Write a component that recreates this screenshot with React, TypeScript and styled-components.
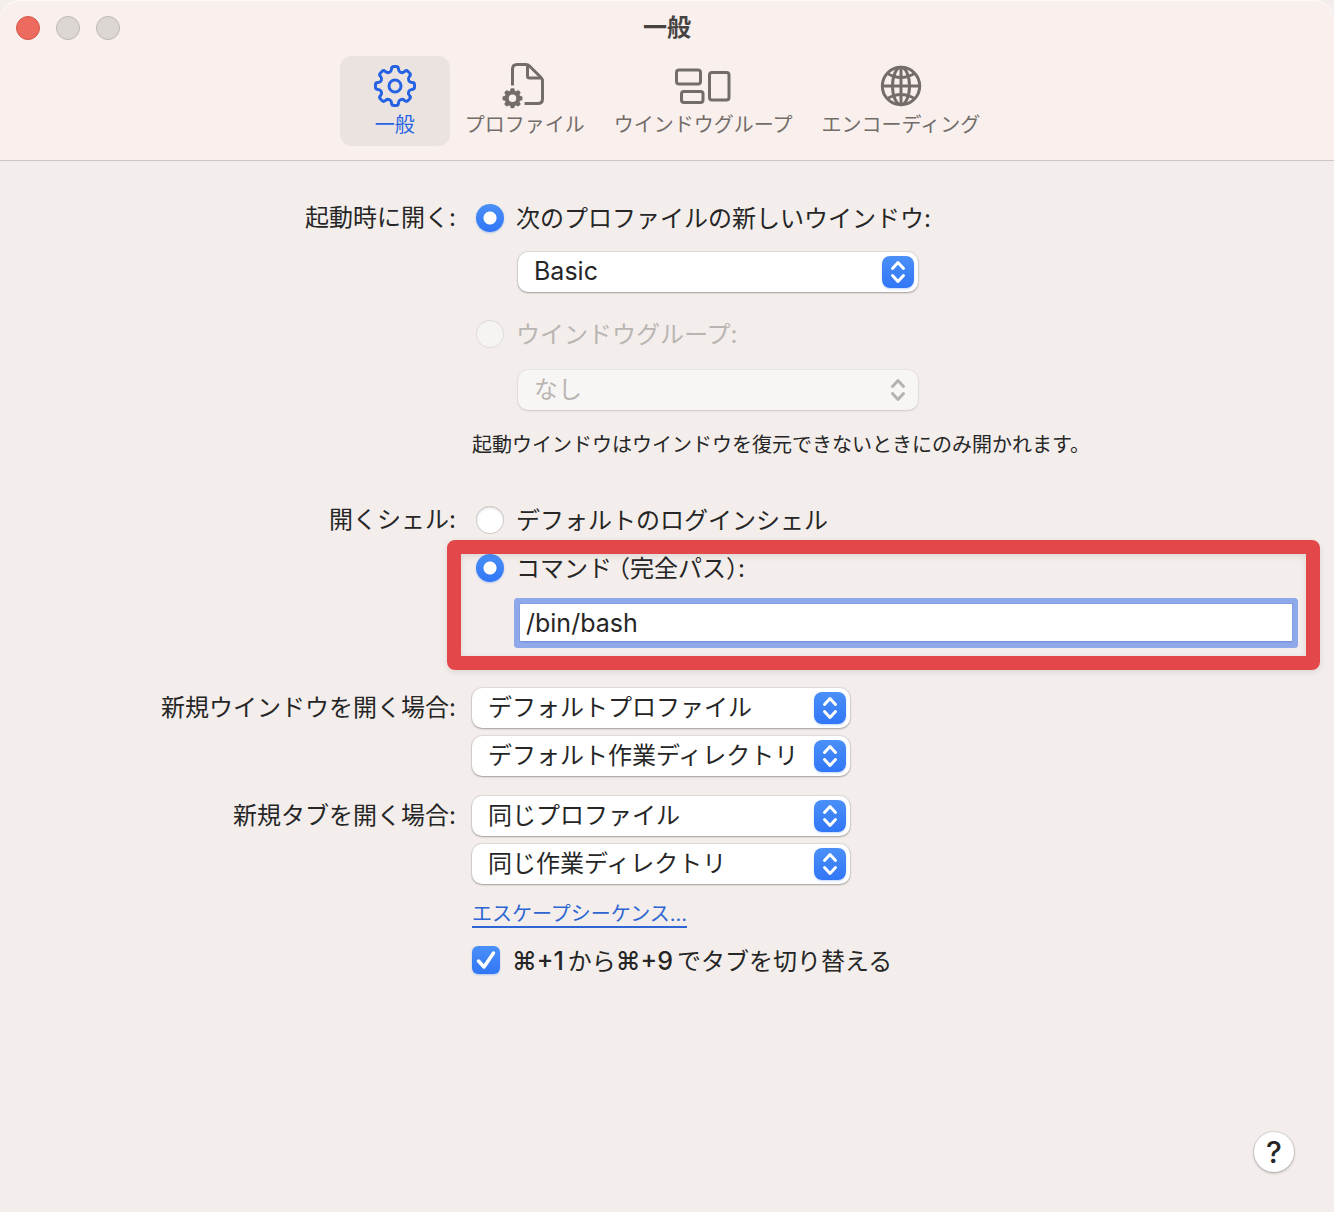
import React, { useState } from "react";
import styled, { createGlobalStyle, css } from "styled-components";

const sans = `Inter, "Noto Sans CJK JP", sans-serif`;

const GlobalStyle = createGlobalStyle`
  *, *::before, *::after { box-sizing: border-box; }
  body { margin: 0; background: #f3eeeb; }
  button, input, select { font-family: ${sans}; }
`;

const Window = styled.div`
  min-height: 100vh;
  display: flex;
  flex-direction: column;
  background: #f3eeeb;
  color: #262626;
  font-family: ${sans};
  font-size: 24px;
  line-height: 28px;
`;

const Header = styled.header`
  padding-bottom: 14px;
  border-bottom: 1px solid #cdc7c5;
  border-radius: 20px 20px 0 0;
  background: #f9f0ed;
  box-shadow: inset 0 1px 0 #fffaf8;
`;

const TitleBar = styled.div`
  display: grid;
  grid-template-columns: 1fr auto 1fr;
  align-items: center;
  height: 56px;
  padding: 0 16px;
`;

const Lights = styled.div`
  display: flex;
  gap: 16px;
`;

const Light = styled.button<{ $active?: boolean }>`
  width: 24px;
  height: 24px;
  padding: 0;
  border-radius: 50%;
  border: 1px solid ${(p) => (p.$active ? "#d5574c" : "#bdb8b5")};
  background: ${(p) => (p.$active ? "#ec6a5e" : "#dcd7d3")};
`;

const Title = styled.h1`
  margin: 0;
  font-size: 24px;
  line-height: 28px;
  font-weight: 700;
  color: #474342;
`;

const Tabs = styled.nav`
  display: flex;
  justify-content: center;
  gap: 1px;
`;

const Tab = styled.button<{ $selected: boolean }>`
  display: flex;
  flex-direction: column;
  align-items: center;
  gap: 3px;
  min-width: 110px;
  padding: 8px 14px 7px;
  border: 0;
  border-radius: 12px;
  background: ${(p) => (p.$selected ? "#ebe3e0" : "transparent")};
  color: ${(p) => (p.$selected ? "#2663e4" : "#736d6a")};
  font-size: 20px;
  line-height: 28px;
  white-space: nowrap;
`;

const TabIcon = styled.svg`
  display: block;
  width: 60px;
  height: 44px;
  overflow: visible;
  fill: none;
  stroke: currentColor;
  stroke-width: 3px;
  stroke-linecap: butt;
  stroke-linejoin: round;
`;

const Form = styled.form`
  flex: 1;
  display: flex;
  flex-direction: column;
  padding: 43px 36px 40px 0;
`;

const Section = styled.section<{ $gap: number }>`
  display: grid;
  grid-template-columns: 456px minmax(0, 1fr);
  column-gap: 16px;
  margin-bottom: ${(p) => p.$gap}px;
`;

const SectionLabel = styled.div<{ $beside?: "select" }>`
  text-align: right;
  padding-top: ${(p) => (p.$beside ? 6 : 0)}px;
`;

const Stack = styled.div<{ $gap: number }>`
  display: flex;
  flex-direction: column;
  align-items: flex-start;
  gap: ${(p) => p.$gap}px;
`;

const Choice = styled.label<{ $disabled?: boolean; $indent?: number }>`
  display: flex;
  align-items: center;
  gap: 12px;
  height: 28px;
  padding-left: ${(p) => p.$indent ?? 4}px;
  color: ${(p) => (p.$disabled ? "#b9b5b3" : "inherit")};
`;

const ChoiceText = styled.span`
  padding-top: 2px;
`;

const blue = "linear-gradient(#4a90f8, #3176f6)";

const Radio = styled.input`
  appearance: none;
  flex: none;
  width: 28px;
  height: 28px;
  margin: 0;
  border-radius: 50%;
  background: #fff;
  box-shadow: inset 0 0 0 1px #cfcbc9, inset 0 2px 3px rgba(0, 0, 0, 0.12);

  &:checked {
    background: radial-gradient(circle, #fff 0 6px, transparent 7px), ${blue};
    box-shadow: 0 1px 2px rgba(49, 118, 246, 0.35);
  }
  &:disabled {
    background: #f6f4f2;
    box-shadow: inset 0 0 0 1px #e2dddb, inset 0 1px 2px rgba(0, 0, 0, 0.05);
  }
`;

const Indented = styled.div`
  align-self: stretch;
  padding-left: 46px;
`;

const SelectBox = styled.div<{ $width: number }>`
  position: relative;
  width: ${(p) => p.$width}px;
  max-width: 100%;
`;

const SelectControl = styled.select<{ $latin?: boolean }>`
  appearance: none;
  display: block;
  width: 100%;
  height: 40px;
  padding: 0 44px ${(p) => (p.$latin ? 2 : 0)}px 16px;
  border: 0;
  border-radius: 10px;
  background: #fff;
  color: #262626;
  font-size: ${(p) => (p.$latin ? 25 : 24)}px;
  line-height: 36px;
  box-shadow: 0 0 1px 1px rgba(0, 0, 0, 0.08), 0 1px 2px rgba(0, 0, 0, 0.28);

  &:disabled {
    background: #f8f6f4;
    color: #b9b5b3;
    opacity: 1;
    box-shadow: 0 0 1px 1px rgba(0, 0, 0, 0.04), 0 1px 2px rgba(0, 0, 0, 0.12);
  }
`;

const Badge = styled.span<{ $disabled?: boolean }>`
  position: absolute;
  top: 4px;
  right: 4px;
  width: 32px;
  height: 32px;
  border-radius: 8px;
  pointer-events: none;
  color: #b5b2b0;
  ${(p) =>
    !p.$disabled &&
    css`
      color: #fff;
      background: ${blue};
      box-shadow: 0 1px 2px rgba(49, 118, 246, 0.3);
    `}
`;

const Note = styled.p`
  margin: 0;
  font-size: 20px;
  line-height: 26px;
`;

const Command = styled.div`
  position: relative;
  align-self: stretch;
  display: flex;
  flex-direction: column;
  gap: 22px;
`;

const Highlight = styled.div`
  position: absolute;
  inset: -14px -22px -28px -25px;
  border: 14px solid #e4474a;
  border-radius: 8px;
  pointer-events: none;
  box-shadow: 0 2px 6px rgba(0, 0, 0, 0.1), inset 0 2px 6px rgba(0, 0, 0, 0.1);
`;

const CommandField = styled.div`
  padding: 0 6px 0 48px;
`;

const TextInput = styled.input`
  display: block;
  width: 100%;
  height: 38px;
  padding: 0 6px;
  border: 0;
  border-radius: 1px;
  outline: none;
  background: #fff;
  color: #262626;
  font-size: 25px;
  line-height: 36px;
  box-shadow: inset 0 -1px 0 #7593d8, 0 0 0 1px #85a0e5, 0 0 0 6px #8ea8ea;
`;

const Bracket = styled.span<{ $opening?: boolean }>`
  margin-left: ${(p) => (p.$opening ? 6 : 0)}px;
  font-feature-settings: "halt";
`;

const Keys = styled.span`
  margin-right: 4px;
  font-size: 25px;
  font-weight: 500;
`;

const Link = styled.a`
  color: #2d66d2;
  font-size: 20px;
  line-height: 24px;
  border-bottom: 2px solid #2d66d2;
  text-decoration: none;
`;

const Checkbox = styled.input`
  appearance: none;
  grid-area: 1 / 1;
  width: 28px;
  height: 28px;
  margin: 0;
  border-radius: 6px;
  background: #fff;
  box-shadow: inset 0 0 0 1px #cfcbc9;

  &:checked {
    background: ${blue};
    box-shadow: 0 1px 2px rgba(49, 118, 246, 0.35);
  }
`;

const CheckboxFrame = styled.span`
  display: grid;
  flex: none;
`;

const Tick = styled.svg`
  grid-area: 1 / 1;
  pointer-events: none;
`;

const Footer = styled.footer`
  display: flex;
  justify-content: flex-end;
  margin-top: auto;
  padding-right: 4px;
`;

const HelpButton = styled.button`
  width: 40px;
  height: 40px;
  padding: 0;
  border: 0;
  border-radius: 50%;
  background: #fff;
  color: #262626;
  font-size: 30px;
  line-height: 40px;
  font-weight: 500;
  box-shadow: 0 0 1px 1px rgba(0, 0, 0, 0.08), 0 1px 3px rgba(0, 0, 0, 0.28);
`;

type GearShape = { root: number; outer: number; rootAngle: number; outerAngle: number; soft: number };

/** Builds an eight-toothed gear outline with softened corners. */
function gearPath(cx: number, cy: number, { root, outer, rootAngle, outerAngle, soft }: GearShape) {
  const points: [number, number][] = [];
  for (let i = 0; i < 8; i++) {
    for (const [offset, radius] of [
      [-rootAngle, root],
      [-outerAngle, outer],
      [outerAngle, outer],
      [rootAngle, root],
    ]) {
      const a = ((i * 45 + offset - 90) * Math.PI) / 180;
      points.push([cx + radius * Math.cos(a), cy + radius * Math.sin(a)]);
    }
  }
  const toward = (a: [number, number], b: [number, number]) => {
    const length = Math.hypot(b[0] - a[0], b[1] - a[1]);
    const t = Math.min(soft / length, 0.5);
    return `${(a[0] + (b[0] - a[0]) * t).toFixed(2)} ${(a[1] + (b[1] - a[1]) * t).toFixed(2)}`;
  };
  return (
    points
      .map((p, i) => {
        const before = points[(i + points.length - 1) % points.length];
        const after = points[(i + 1) % points.length];
        return `${i ? "L" : "M"}${toward(p, before)} Q${p[0].toFixed(2)} ${p[1].toFixed(2)} ${toward(p, after)}`;
      })
      .join(" ") + "Z"
  );
}

const largeGear = gearPath(30, 22, { root: 15, outer: 19.8, rootAngle: 14, outerAngle: 9.5, soft: 2.2 });
const smallGear = gearPath(17.5, 34.3, { root: 7.8, outer: 10.2, rootAngle: 17, outerAngle: 11, soft: 1 });

const GeneralIcon = () => (
  <TabIcon viewBox="0 0 60 44" aria-hidden="true">
    <path d={largeGear} />
    <circle cx="30" cy="22" r="6" />
  </TabIcon>
);

const ProfileIcon = () => (
  <TabIcon viewBox="0 0 60 44" aria-hidden="true">
    <path d="M17.500 21.500V5q0-4.500 4.500-4.500H31q2 0 3.500 1.500L46 13.500q1.500 1.500 1.500 3.500V35q0 4.500-4.500 4.500H29.500" />
    <path d="M32.500 1V12q0 2 2 2H47" />
    <path
      d={`${smallGear} M21.300 34.300a3.800 3.800 0 1 0-7.600 0a3.800 3.800 0 1 0 7.600 0Z`}
      fill="currentColor"
      fillRule="evenodd"
      stroke="none"
    />
  </TabIcon>
);

const GroupIcon = () => (
  <TabIcon viewBox="0 0 60 44" aria-hidden="true">
    <rect x="3.500" y="6" width="24" height="14" rx="2.500" />
    <rect x="8.500" y="27.500" width="21.500" height="11" rx="2.500" />
    <rect x="36.500" y="8.500" width="19.500" height="27.500" rx="2.500" />
  </TabIcon>
);

const EncodingIcon = () => (
  <TabIcon viewBox="0 0 60 44" aria-hidden="true">
    <circle cx="30" cy="22" r="18.700" />
    <ellipse cx="30" cy="22" rx="8.500" ry="18.700" />
    <path d="M30 3V41M11 22H49M16.500 9.500Q30 17.500 43.500 9.500M16.500 34.500Q30 26.500 43.500 34.500" />
  </TabIcon>
);

const tabs = [
  { label: "一般", Icon: GeneralIcon },
  { label: "プロファイル", Icon: ProfileIcon },
  { label: "ウインドウグループ", Icon: GroupIcon },
  { label: "エンコーディング", Icon: EncodingIcon },
];

type PopUpProps = { label: string; value: string; width: number; disabled?: boolean; latin?: boolean };

const PopUp = ({ label, value, width, disabled, latin }: PopUpProps) => (
  <SelectBox $width={width}>
    <SelectControl aria-label={label} disabled={disabled} $latin={latin}>
      <option>{value}</option>
    </SelectControl>
    <Badge $disabled={disabled}>
      <svg width="32" height="32" viewBox="0 0 32 32" fill="none" stroke="currentColor" strokeWidth="3" strokeLinecap="round" strokeLinejoin="round" aria-hidden="true">
        <path d="M10.500 12.500L16 6.500L21.500 12.500M10.500 19.500L16 25.500L21.500 19.500" />
      </svg>
    </Badge>
  </SelectBox>
);

export default function App() {
  const [tab, setTab] = useState(0);
  const [command, setCommand] = useState("/bin/bash");

  return (
    <Window>
      <GlobalStyle />
      <Header>
        <TitleBar>
          <Lights>
            <Light $active aria-label="閉じる" />
            <Light aria-label="しまう" />
            <Light aria-label="拡大" />
          </Lights>
          <Title>一般</Title>
        </TitleBar>
        <Tabs>
          {tabs.map(({ label, Icon }, i) => (
            <Tab key={label} type="button" $selected={i === tab} onClick={() => setTab(i)}>
              <Icon />
              {label}
            </Tab>
          ))}
        </Tabs>
      </Header>

      <Form onSubmit={(e) => e.preventDefault()}>
        <Section $gap={48}>
          <SectionLabel>起動時に開く:</SectionLabel>
          <Stack $gap={28}>
            <Stack $gap={20}>
              <Choice>
                <Radio type="radio" name="startup" defaultChecked />
                <ChoiceText>次のプロファイルの新しいウインドウ:</ChoiceText>
              </Choice>
              <Indented>
                <PopUp label="プロファイル" value="Basic" width={400} latin />
              </Indented>
            </Stack>
            <Stack $gap={22}>
              <Choice $disabled>
                <Radio type="radio" name="startup" disabled />
                <ChoiceText>ウインドウグループ:</ChoiceText>
              </Choice>
              <Indented>
                <PopUp label="ウインドウグループ" value="なし" width={400} disabled />
              </Indented>
              <Note>起動ウインドウはウインドウを復元できないときにのみ開かれます。</Note>
            </Stack>
          </Stack>
        </Section>

        <Section $gap={46}>
          <SectionLabel>開くシェル:</SectionLabel>
          <Stack $gap={20}>
            <Choice>
              <Radio type="radio" name="shell" />
              <ChoiceText>デフォルトのログインシェル</ChoiceText>
            </Choice>
            <Command>
              <Choice>
                <Radio type="radio" name="shell" defaultChecked />
                <ChoiceText>
                  コマンド<Bracket $opening>（</Bracket>完全パス<Bracket>）</Bracket>:
                </ChoiceText>
              </Choice>
              <CommandField>
                <TextInput aria-label="コマンド" value={command} onChange={(e) => setCommand(e.target.value)} />
              </CommandField>
              <Highlight />
            </Command>
          </Stack>
        </Section>

        <Section $gap={20}>
          <SectionLabel $beside="select">新規ウインドウを開く場合:</SectionLabel>
          <Stack $gap={8}>
            <PopUp label="新規ウインドウのプロファイル" value="デフォルトプロファイル" width={378} />
            <PopUp label="新規ウインドウの作業ディレクトリ" value="デフォルト作業ディレクトリ" width={378} />
          </Stack>
        </Section>

        <Section $gap={18}>
          <SectionLabel $beside="select">新規タブを開く場合:</SectionLabel>
          <Stack $gap={8}>
            <PopUp label="新規タブのプロファイル" value="同じプロファイル" width={378} />
            <PopUp label="新規タブの作業ディレクトリ" value="同じ作業ディレクトリ" width={378} />
          </Stack>
        </Section>

        <Section $gap={20}>
          <span />
          <Stack $gap={18}>
            <Link href="#escape">エスケープシーケンス...</Link>
            <Choice $indent={0}>
              <CheckboxFrame>
                <Checkbox type="checkbox" defaultChecked />
                <Tick width="28" height="28" viewBox="0 0 28 28" fill="none" stroke="#fff" strokeWidth="3.500" strokeLinecap="round" strokeLinejoin="round" aria-hidden="true">
                  <path d="M6.500 15L12 21L21.500 7" />
                </Tick>
              </CheckboxFrame>
              <ChoiceText>
                <Keys>⌘+1</Keys>から<Keys>⌘+9</Keys>でタブを切り替える
              </ChoiceText>
            </Choice>
          </Stack>
        </Section>

        <Footer>
          <HelpButton type="button" aria-label="ヘルプ">?</HelpButton>
        </Footer>
      </Form>
    </Window>
  );
}
